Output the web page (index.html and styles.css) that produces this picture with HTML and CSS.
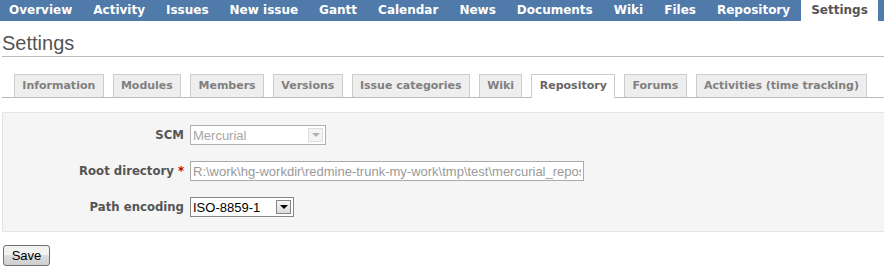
FILE: index.html
```html
<!DOCTYPE html>
<html>
<head>
<meta name="viewport" content="width=device-width, initial-scale=1">
<link rel="stylesheet" href="styles.css">
</head>
<body>

<div class="mainmenu">
<a href="#">Overview</a>
<a href="#">Activity</a>
<a href="#">Issues</a>
<a href="#">New issue</a>
<a href="#">Gantt</a>
<a href="#">Calendar</a>
<a href="#">News</a>
<a href="#">Documents</a>
<a href="#">Wiki</a>
<a href="#">Files</a>
<a href="#">Repository</a>
<a href="#" class="sel">Settings</a>
</div>

<div class="content">
<h2>Settings</h2>

<div class="tabs">
<a href="#">Information</a>
<a href="#">Modules</a>
<a href="#">Members</a>
<a href="#">Versions</a>
<a href="#">Issue categories</a>
<a href="#">Wiki</a>
<a href="#" class="sel">Repository</a>
<a href="#">Forums</a>
<a href="#">Activities (time tracking)</a>
</div>

<form class="box">
<div class="row">
<label>SCM</label>
<span class="combo dis"><select disabled><option>Mercurial</option></select><span class="arr"></span></span>
</div>
<div class="row">
<label>Root directory <span class="req">*</span></label>
<input type="text" class="path" disabled value="R:\work\hg-workdir\redmine-trunk-my-work\tmp\test\mercurial_repository">
</div>
<div class="row">
<label>Path encoding</label>
<span class="combo enc"><select><option>ISO-8859-1</option></select><span class="arr"></span></span>
</div>
</form>

<button class="save">Save</button>
</div>

</body>
</html>
```

FILE: styles.css
```css
body{margin:0;font-family:"DejaVu Sans",Verdana,sans-serif;font-size:12px;color:#333;background-color:white;}
a{text-decoration:none;}
.mainmenu{display:flex;height:21px;background-color:#507aaa;gap:1px;}
.mainmenu a{display:block;padding:0 10px;line-height:21px;color:white;font-weight:bold;font-size:12px;}
.mainmenu a:first-child{padding-left:9px;}
.mainmenu a.sel{background-color:white;color:#555;}
.content{padding-left:2px;}
h2{margin:10px 0 0;padding-bottom:1px;font-family:"Liberation Sans",Arial,sans-serif;font-weight:normal;font-size:20px;line-height:24px;color:#555;border-bottom:1px solid #bbb;}
.tabs{display:flex;gap:9px;align-items:flex-end;margin-top:17px;padding-left:12px;height:23px;border-bottom:1px solid #bbb;}
.tabs a{display:block;flex-shrink:0;white-space:nowrap;height:22px;line-height:22px;padding:0 7.3px;border:1px solid #ccc;border-bottom:none;background-color:#eee;color:#808080;font-weight:bold;font-size:11px;}
.tabs a.sel{background-color:white;color:#666;height:23px;margin-bottom:-1px;}
.box{margin:14px 0 0;padding:12px 0 14px;background-color:#f5f5f5;border:1px solid #e4e4e4;border-right:none;}
.row{display:flex;align-items:center;height:20px;margin-bottom:16px;}
.row:last-child{margin-bottom:0;}
.row label{width:181px;text-align:right;padding-right:6px;font-weight:bold;font-size:11.7px;color:#555;}
.req{color:#bb0000;}
.combo{display:inline-flex;align-items:center;height:20px;box-sizing:border-box;border:1px solid #a5a5a5;background-color:white;}
.combo select{appearance:none;-webkit-appearance:none;border:none;background:transparent;font-family:"Liberation Sans",Arial,sans-serif;font-size:13px;padding:0 2px;height:18px;outline:none;}
.combo .arr{width:15px;height:14px;margin-right:2px;box-sizing:border-box;display:flex;align-items:center;justify-content:center;}
.combo .arr::after{content:"";border-left:4px solid transparent;border-right:4px solid transparent;border-top:4px solid black;}
.dis{width:136px;border-color:#b0b0b0;}
.dis select{flex:1;color:#808080;}
.dis .arr{background-color:#f4f4f4;border:1px solid #dcdcdc;}
.dis .arr::after{border-top-color:#b0b0b0;}
.enc{width:104px;border:1px solid #888;}
.enc select{flex:1;color:black;}
.enc .arr{background:linear-gradient(#f6f6f6,#dcdcdc);border:1px solid #888;}
.path{width:394px;height:20px;box-sizing:border-box;border:1px solid #aaa;background-color:white;padding:0 2px;font-family:"Liberation Sans",Arial,sans-serif;font-size:13px;color:#9a9a9a;}
.save{margin-top:13px;margin-left:1px;width:47px;height:21px;padding:0;border:1px solid #707070;border-radius:3px;background:linear-gradient(#f2f2f2 50%,#dddddd 50%,#cfcfcf);font-family:"Liberation Sans",Arial,sans-serif;font-size:13px;color:black;}
```
